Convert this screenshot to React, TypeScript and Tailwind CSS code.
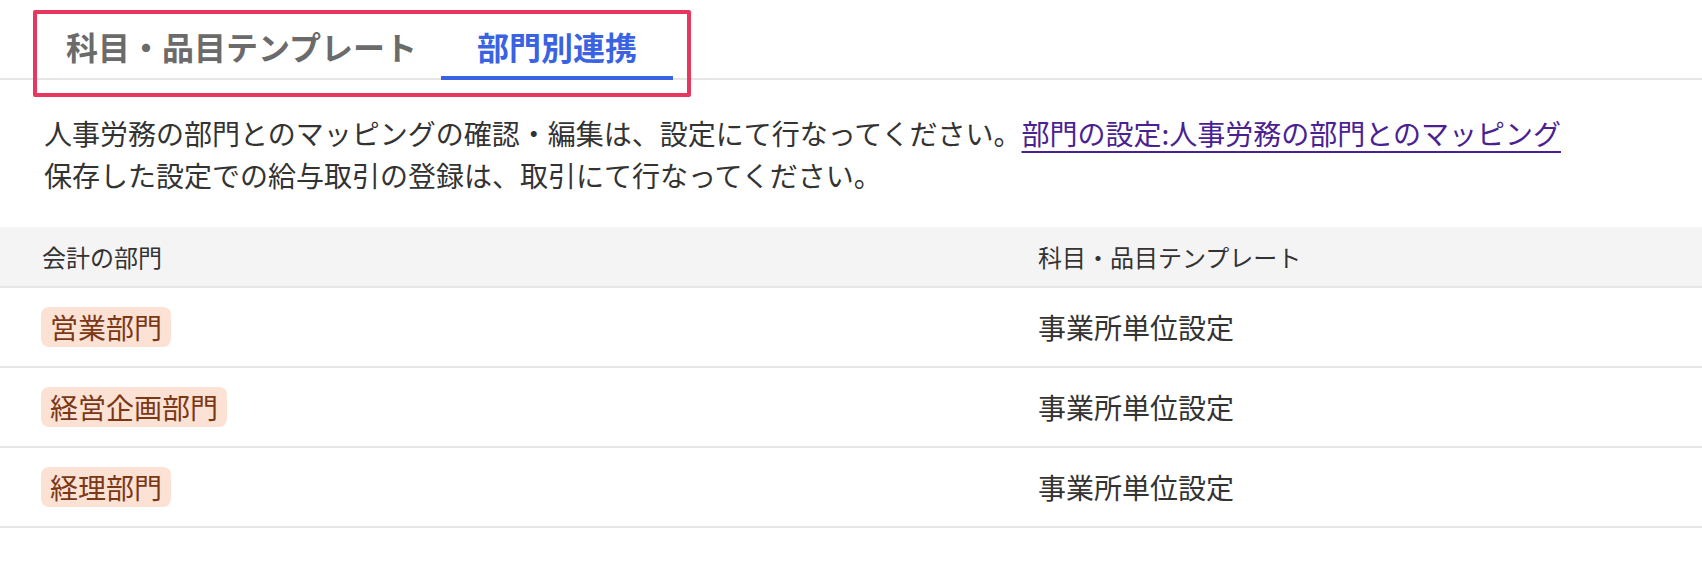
import React from "react";

const rows = ["営業部門", "経営企画部門", "経理部門"];

export default function App() {
  return (
    <div
      className="relative w-[1702px] h-[584px] bg-white text-[#333333]"
      style={{ fontFamily: '"Noto Sans CJK JP", "Noto Sans", sans-serif' }}
    >
      {/* Tabs */}
      <div className="flex items-end h-[80px] border-b-2 border-[#e6e6e6] pl-[66px]">
        <div className="pt-[30px] pb-[18px] -mb-[2px] text-[32px] leading-[32px] font-bold text-[#6b6b6b]">
          科目・品目テンプレート
        </div>
        <div className="ml-[24px] px-[36px] pt-[30px] pb-[14px] -mb-[2px] border-b-4 border-[#3a63e4] text-[32px] leading-[32px] font-bold text-[#3a63e4]">
          部門別連携
        </div>
      </div>

      {/* Description */}
      <div className="pt-[32px] pl-[44px] text-[28px] leading-[42px] text-[#333333]">
        <p>
          人事労務の部門とのマッピングの確認・編集は、設定にて行なってください。
          <a href="#" className="text-[#4a2192] underline decoration-2 underline-offset-[6px]">
            部門の設定:人事労務の部門とのマッピング
          </a>
        </p>
        <p>保存した設定での給与取引の登録は、取引にて行なってください。</p>
      </div>

      {/* Table */}
      <div className="mt-[31px]">
        <div className="grid grid-cols-[996px_1fr] h-[61px] items-center bg-[#f5f4f5] border-b-2 border-[#e6e6e6] text-[24px] leading-[24px] text-[#333333]">
          <div className="pl-[42px]">会計の部門</div>
          <div className="pl-[42px]">科目・品目テンプレート</div>
        </div>
        {rows.map((r) => (
          <div
            key={r}
            className="grid grid-cols-[996px_1fr] h-[80px] items-center border-b-2 border-[#e6e6e6] text-[28px]"
          >
            <div className="pl-[41px]">
              <span className="inline-block rounded-[8px] bg-[#fbe2d5] px-[9px] h-[40px] leading-[40px] text-[#7b3817]">
                {r}
              </span>
            </div>
            <div className="pl-[42px] leading-[40px] text-[#333333]">事業所単位設定</div>
          </div>
        ))}
      </div>

      {/* Annotation box */}
      <div className="absolute left-[33px] top-[10px] w-[658px] h-[87px] border-4 border-[#e8375e] rounded-[2px] pointer-events-none" />
    </div>
  );
}
